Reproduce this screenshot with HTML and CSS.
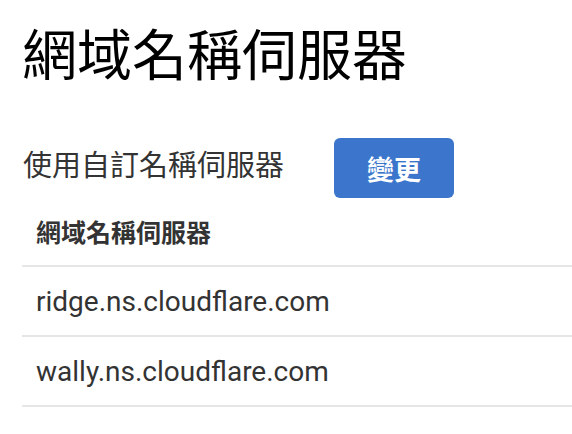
FILE: index.html
```html
<!DOCTYPE html>
<html lang="zh-Hant">
<head>
<meta charset="utf-8">
<link rel="stylesheet" href="styles.css">
</head>
<body>
<main class="page">
  <h1 class="title">網域名稱伺服器</h1>
  <div class="custom-row">
    <span class="custom-label">使用自訂名稱伺服器</span>
    <button class="change-btn">變更</button>
  </div>
  <table class="ns-table">
    <thead>
      <tr><th>網域名稱伺服器</th></tr>
    </thead>
    <tbody>
      <tr><td>ridge.ns.cloudflare.com</td></tr>
      <tr><td>wally.ns.cloudflare.com</td></tr>
    </tbody>
  </table>
</main>
</body>
</html>
```
FILE: styles.css
```css
html, body {
  margin: 0;
  padding: 0;
  background: #ffffff;
}
body {
  font-family: "Noto Sans CJK TC", "Noto Sans", sans-serif;
  color: #1a1a1a;
  overflow: hidden;
}
.page {
  padding: 16px 0 0 22px;
}
.title {
  margin: 0;
  font-size: 55px;
  font-weight: 400;
  line-height: 70px;
  color: #000;
}
.custom-row {
  display: flex;
  align-items: center;
  gap: 50px;
  margin-top: 52px;
}
.custom-label {
  font-size: 29px;
  line-height: 40px;
  margin-bottom: 10px;
  margin-left: 1px;
  color: #333;
}
.change-btn {
  width: 120px;
  height: 60px;
  border: none;
  border-radius: 6px;
  background: #3b76cc;
  color: #fff;
  font-family: "Noto Sans CJK TC", sans-serif;
  font-size: 27px;
  font-weight: 700;
  padding: 0;
}
.ns-table {
  border-collapse: collapse;
  width: 100%;
  margin-top: -1px;
}
.ns-table th,
.ns-table td {
  text-align: left;
  padding: 0 14px;
  height: 68px;
  border-bottom: 2px solid #e6e6e6;
}
.ns-table th {
  font-size: 25px;
  font-weight: 700;
  color: #333;
}
.ns-table td {
  font-family: Roboto, "Noto Sans", sans-serif;
  font-size: 28px;
  color: #333;
}
```
